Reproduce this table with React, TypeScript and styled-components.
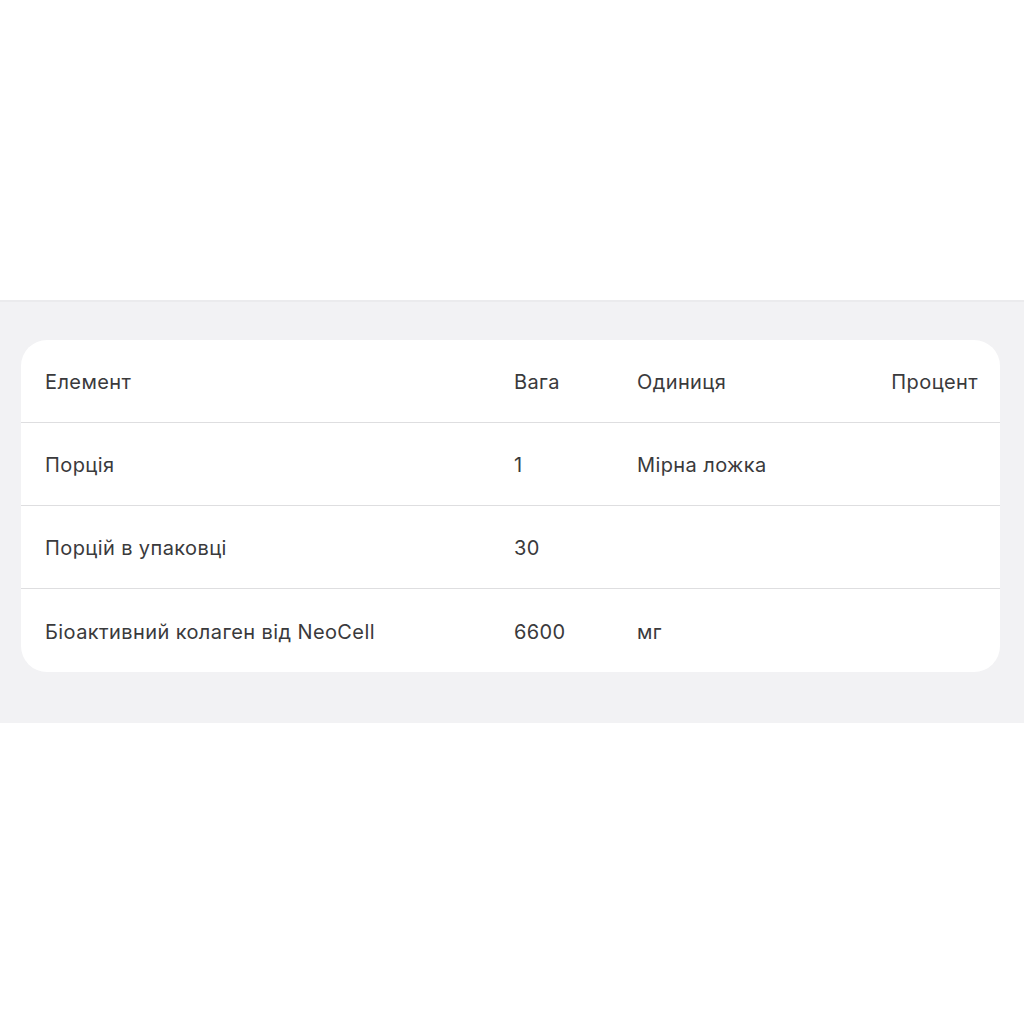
import styled, { createGlobalStyle } from "styled-components";

const GlobalStyle = createGlobalStyle`
  body {
    margin: 0;
    background: #ffffff;
    font-family: Inter, "Noto Sans", sans-serif;
  }
`;

const Page = styled.div`
  padding-top: 300px;
`;

const Band = styled.section`
  background: #f2f2f4;
  border-top: 2px solid #ebebed;
  padding: 38px 24px 51px 21px;
`;

const Card = styled.div`
  background: #ffffff;
  border-radius: 26px;
  overflow: hidden;
`;

const Row = styled.div<{ $last?: boolean }>`
  display: grid;
  grid-template-columns: 469px 123px 1fr auto;
  align-items: center;
  box-sizing: border-box;
  height: ${(p) => (p.$last ? "83px" : "83px")};
  padding: 2px 22px 0 24px;
  border-bottom: ${(p) => (p.$last ? "none" : "1px solid #dedee0")};
  font-size: 20px;
  letter-spacing: 0.4px;
  color: #3a3a3c;
`;

const Cell = styled.div<{ $right?: boolean }>`
  text-align: ${(p) => (p.$right ? "right" : "left")};
  white-space: nowrap;
`;

const rows = [
  ["Порція", "1", "Мірна ложка", ""],
  ["Порцій в упаковці", "30", "", ""],
  ["Біоактивний колаген від NeoCell", "6600", "мг", ""],
];

export default function App() {
  return (
    <Page>
      <GlobalStyle />
      <Band>
        <Card>
          <Row>
            <Cell>Елемент</Cell>
            <Cell>Вага</Cell>
            <Cell>Одиниця</Cell>
            <Cell $right>Процент</Cell>
          </Row>
          {rows.map((r, i) => (
            <Row key={i} $last={i === rows.length - 1}>
              <Cell>{r[0]}</Cell>
              <Cell>{r[1]}</Cell>
              <Cell>{r[2]}</Cell>
              <Cell $right>{r[3]}</Cell>
            </Row>
          ))}
        </Card>
      </Band>
    </Page>
  );
}
